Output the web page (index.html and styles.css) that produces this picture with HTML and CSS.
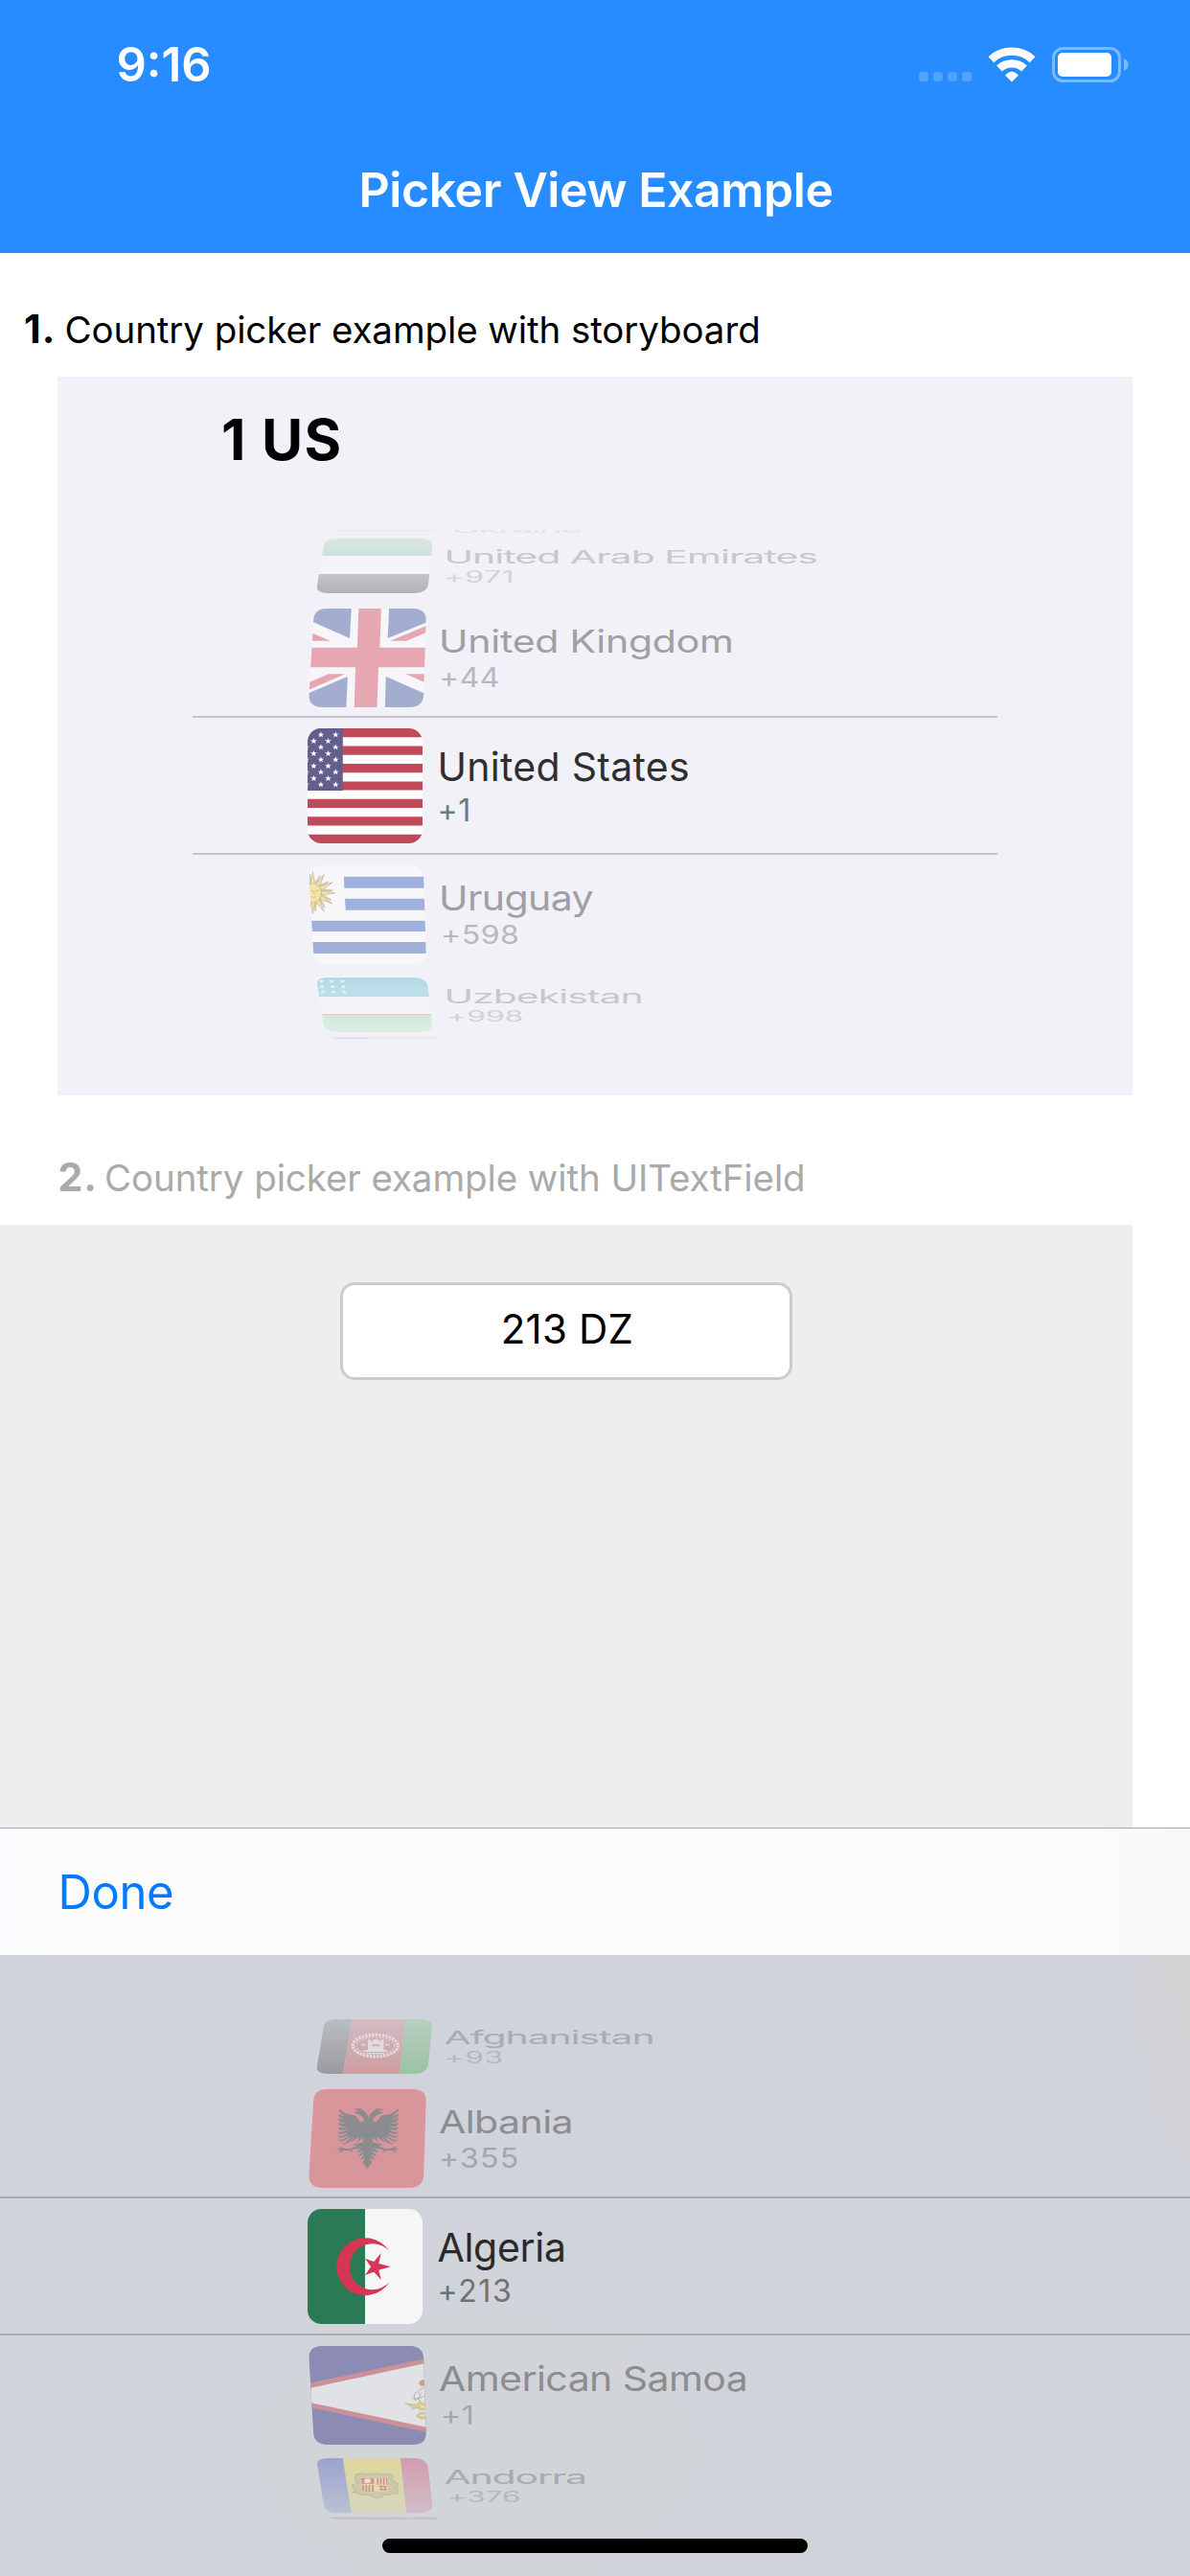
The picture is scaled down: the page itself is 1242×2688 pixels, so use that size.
FILE: index.html
```
<!DOCTYPE html>
<html lang="en">
<head>
<meta charset="utf-8">
<title>Picker View Example</title>
<link rel="stylesheet" href="styles.css">
</head>
<body>
<svg class="defs" aria-hidden="true">
  <defs>
    <clipPath id="tilt-near-top"><path d="M115 0H370Q406 3 405 37L398 270Q396 308 355 308H100Q62 306 63 270L76 37Q78 0 115 0Z"/></clipPath>
    <clipPath id="tilt-near-bottom"><path d="M100 0H360Q396 2 398 38L405 271Q406 308 366 308H115Q78 306 76 271L63 38Q62 2 100 0Z"/></clipPath>
    <clipPath id="tilt-far-top"><path d="M140 0H392Q423 2 423 20L412 141Q409 171 368 171H116Q84 169 86 151L106 22Q108 2 140 0Z"/></clipPath>
    <clipPath id="tilt-far-bottom"><path d="M116 0H370Q407 2 411 30L424 152Q421 170 384 171H140Q109 170 105 141L87 20Q84 2 116 0Z"/></clipPath>
    <clipPath id="flat"><rect x="59" width="336" height="360" rx="40" ry="43"/></clipPath>
    <linearGradient id="uae-green" x2="0" y2="1"><stop stop-color="#d9e6e2"/><stop offset="1" stop-color="#cde1da"/></linearGradient>
    <linearGradient id="uae-black" x2="0" y2="1"><stop stop-color="#c4c3c9"/><stop offset="1" stop-color="#b3b2b7"/></linearGradient>
    <linearGradient id="afg-black" x2="0" y2="1"><stop stop-color="#babdc2"/><stop offset="1" stop-color="#999ba0"/></linearGradient>
    <linearGradient id="afg-red" x2="0" y2="1"><stop stop-color="#d1bcc3"/><stop offset="1" stop-color="#cf9ca0"/></linearGradient>
    <linearGradient id="afg-green" x2="0" y2="1"><stop stop-color="#b9cec3"/><stop offset="1" stop-color="#99c49f"/></linearGradient>
    <linearGradient id="and-blue" x2="0" y2="1"><stop stop-color="#9ba4ce"/><stop offset="1" stop-color="#bbc0d4"/></linearGradient>
    <linearGradient id="and-yellow" x2="0" y2="1"><stop stop-color="#ded79c"/><stop offset="1" stop-color="#d6d6bd"/></linearGradient>
    <linearGradient id="and-red" x2="0" y2="1"><stop stop-color="#d29dae"/><stop offset="1" stop-color="#d1bcc7"/></linearGradient>
    <linearGradient id="uzb-blue" x2="0" y2="1"><stop stop-color="#b1dae7"/><stop offset="1" stop-color="#bfe0ea"/></linearGradient>
    <linearGradient id="uzb-green" x2="0" y2="1"><stop stop-color="#d2eada"/><stop offset="1" stop-color="#ddede4"/></linearGradient>
    <path id="star" d="M0-10 2.4-3.1H9.5L3.8 1.2 5.9 8.1 0 3.9-5.9 8.1-3.8 1.2-9.5-3.1H-2.4Z"/>
    <g id="ray"><path d="M-7-24 0-66 7-24Z"/><path d="M7-25Q18-40 22-54Q10-38 2-26" /></g>
    <g id="eagle-half">
      <path d="M2 395L-2 383Q-8 371-20 362Q-32 357-44 365Q-34 364-27 367Q-38 370-43 374Q-25 376-16 388Q-9 397-17 402Q-25 402-29 394Q-33 381-49 380Q-70 377-81 361Q-86 365-83 369Q-77 378-65 384Q-79 381-84 377Q-86 384-79 389Q-72 394-62 395Q-78 396-84 390Q-86 400-75 404L-60 405Q-76 410-84 404Q-84 414-74 417L-58 416Q-74 424-84 418Q-84 428-72 428L-58 426Q-73 438-85 432Q-83 442-71 440L-56 435Q-71 450-85 445Q-83 454-70 451L-53 441Q-67 461-84 457Q-79 466-66 461L-47 446Q-57 465-70 470Q-64 474-54 467L-39 449Q-43 459-51 463Q-43 465-36 458L-26 449Q-25 459-32 465Q-23 464-18 455L-14 450Q-10 463-18 467Q-22 469-29 470L-42 472Q-38 477-32 478Q-43 482-50 486L-68 485-82 477-76 485-92 487-76 490-82 500-66 491-49 492-41 500-45 490Q-33 482-24 487L-15 479Q-22 491-31 496Q-23 500-13 490Q-19 505-28 509Q-20 512-11 502Q-14 516-22 520Q-14 521-7 512Q-9 523-13 529L-2 546H2Z"/>
    </g>
  </defs>
</svg>

<header class="header">
  <div class="status">
    <span class="time">9:16</span>
    <div class="indicators">
      <div class="dots"><i></i><i></i><i></i><i></i></div>
      <svg class="wifi" viewBox="274 56 144 110">
        <g fill="none" stroke="#fff" stroke-width="25"><path d="M281 95A95.5 95.5 0 0 1 411 95"/><path d="M307 123A57 57 0 0 1 385 123"/></g>
        <path fill="#fff" d="M346 165 325 144Q346 121 367 144Z"/>
      </svg>
      <svg class="battery" viewBox="0 0 80 38">
        <rect x="1.5" y="1.5" width="69" height="34" rx="10" fill="none" stroke="#7cbaff" stroke-width="3"/>
        <rect x="6" y="6" width="56" height="25" rx="5" fill="#fff"/>
        <path d="M75 12Q79.500 14 79.500 18.500T75 25Z" fill="#7cbaff"/>
      </svg>
    </div>
  </div>
  <h1 class="title">Picker View Example</h1>
</header>

<main>
  <h2 class="heading first"><b>1.</b><span>Country picker example with storyboard</span></h2>
  <section class="card">
    <p class="selection">1 US</p>
    <div class="picker light">
      <div class="row sliver top">
        <svg class="flag" viewBox="58.8 0 375.2 10" preserveAspectRatio="none"><path fill="#e7e6ed" d="M142 1H435L441 4H133Z"/><path fill="#f3f3dc" d="M130 5H436V7H128Z"/></svg>
        <div class="label"><span class="name">Ukraine</span></div>
      </div>
      <div class="row far up">
        <svg class="flag" viewBox="58.8 0 375.2 171" preserveAspectRatio="none"><g clip-path="url(#tilt-far-top)"><path fill="#f5f4f9" d="M50 0H440V171H50Z"/><path fill="url(#uae-green)" d="M50 0H440V54H50Z"/><path fill="url(#uae-black)" d="M50 111H440V171H50Z"/></g></svg>
        <div class="label"><span class="name">United Arab Emirates</span><span class="code">+971</span></div>
      </div>
      <div class="row near up">
        <svg class="flag" viewBox="58.8 0 375.2 308" preserveAspectRatio="none"><g clip-path="url(#tilt-near-top)"><g transform="translate(0 -315)">
          <path fill="#f6f6fa" d="M50 315H420V623H50Z"/>
          <path fill="#a2adcf" d="M60 315H187L182 408 60 350ZM297 315H420V352L293 408ZM176 527 172 623H55V582ZM288 527 420 589V623H285Z"/>
          <path fill="#e7a7b2" d="M208 315H274L270 437H410V498H266L262 623H195L199 498H60V437H204ZM60 386 126 416H60ZM410 367V388L348 416H300ZM60 547 120 519H168L60 570ZM345 519H410V549Z"/>
        </g></g></svg>
        <div class="label"><span class="name">United Kingdom</span><span class="code">+44</span></div>
      </div>
      <div class="row current">
        <svg class="flag" viewBox="59 0 336 360" preserveAspectRatio="none"><g clip-path="url(#flat)"><g transform="translate(0 -60)">
          <path fill="#fdfdfd" d="M59 60H395V420H59Z"/>
          <path stroke="#be4a5a" stroke-width="27.7" d="M59 73.800H395M59 129.200H395M59 184.600H395M59 240H395M59 295.400H395M59 350.800H395M59 406.200H395"/>
          <path fill="#625f8c" d="M59 60H162V255H59Z"/>
          <g fill="#fff">
            <use href="#star" x="98" y="80"/><use href="#star" x="141" y="80"/><use href="#star" x="77" y="100"/><use href="#star" x="119" y="100"/>
            <use href="#star" x="55" y="119"/><use href="#star" x="98" y="119"/><use href="#star" x="141" y="119"/><use href="#star" x="77" y="139"/><use href="#star" x="119" y="139"/>
            <use href="#star" x="55" y="158"/><use href="#star" x="98" y="158"/><use href="#star" x="141" y="158"/><use href="#star" x="77" y="178"/><use href="#star" x="119" y="178"/>
            <use href="#star" x="55" y="197"/><use href="#star" x="98" y="197"/><use href="#star" x="141" y="197"/><use href="#star" x="77" y="217"/><use href="#star" x="119" y="217"/>
            <use href="#star" x="55" y="236"/><use href="#star" x="98" y="236"/><use href="#star" x="141" y="236"/>
          </g>
        </g></g></svg>
        <div class="label"><span class="name">United States</span><span class="code">+1</span></div>
      </div>
      <div class="row near down">
        <svg class="flag" viewBox="58.8 0 375.2 308" preserveAspectRatio="none"><g clip-path="url(#tilt-near-bottom)"><g transform="translate(0 -37)">
          <path fill="#f7f7fa" d="M50 37H420V350H50Z"/>
          <path fill="#a0b0dc" d="M165 72H410V108H166ZM168 141H410V177H170ZM60 210H410V243H60ZM60 276H410V312H60Z"/>
          <g transform="translate(74 123)" fill="#f5e3a2" stroke="#b9b4a4" stroke-width="2">
            <use href="#ray"/><use href="#ray" transform="rotate(30)"/><use href="#ray" transform="rotate(60)"/><use href="#ray" transform="rotate(90)"/><use href="#ray" transform="rotate(120)"/><use href="#ray" transform="rotate(150)"/><use href="#ray" transform="rotate(180)"/><use href="#ray" transform="rotate(330)"/>
            <ellipse rx="25" ry="30"/><path fill="none" d="M-6-7H2M8-7H17M-4 12Q4 16 11 11M4-5V5"/>
          </g>
        </g></g></svg>
        <div class="label"><span class="name">Uruguay</span><span class="code">+598</span></div>
      </div>
      <div class="row far down">
        <svg class="flag" viewBox="58.8 0 375.2 171" preserveAspectRatio="none"><g clip-path="url(#tilt-far-bottom)">
          <path fill="#f4f4f9" d="M50 0H440V171H50Z"/><path fill="url(#uzb-blue)" d="M50 0H440V57H50Z"/><path fill="url(#uzb-green)" d="M50 117H440V171H50Z"/><path stroke="#ebc8d0" stroke-width="3" d="M50 58.500H440M50 115.500H440"/>
          <g fill="#f2f7fa" transform="scale(1 .5)"><use href="#star" x="99" y="24"/><use href="#star" x="130" y="24"/><use href="#star" x="161" y="24"/><use href="#star" x="101" y="57"/><use href="#star" x="133" y="57"/><use href="#star" x="164" y="57"/><use href="#star" x="103" y="91"/><use href="#star" x="135" y="91"/><use href="#star" x="166" y="91"/></g>
        </g></svg>
        <div class="label"><span class="name">Uzbekistan</span><span class="code">+998</span></div>
      </div>
      <div class="row sliver bottom">
        <svg class="flag" viewBox="58.800 0 390 12" preserveAspectRatio="none"><path fill="#f3e3e9" d="M120 2H430L436 5H125Z"/><path fill="#e0eaea" d="M134 6H441L446 10H145Z"/><path fill="#dcdae2" d="M136 5H240V8H140Z"/></svg>
      </div>
    </div>
  </section>

  <h2 class="heading second"><b>2.</b><span>Country picker example with UITextField</span></h2>
  <section class="field-area"><div class="field">213 DZ</div></section>
</main>

<footer class="keyboard">
  <div class="toolbar"><span class="done">Done</span></div>
  <div class="tray">
    <div class="picker dark">
      <div class="row sliver top"></div>
      <div class="row far up">
        <svg class="flag" viewBox="58.8 0 375.2 171" preserveAspectRatio="none"><g clip-path="url(#tilt-far-top)">
          <path fill="url(#afg-black)" d="M50 0H189L163 171H50Z"/><path fill="url(#afg-red)" d="M189 0H345L328 171H163Z"/><path fill="url(#afg-green)" d="M345 0H440V171H328Z"/>
          <g fill="none" stroke="#e2dcdf"><ellipse cx="257" cy="83" rx="66" ry="34" stroke-width="9" stroke-dasharray="7 3"/><ellipse cx="257" cy="83" rx="56" ry="27" stroke-width="3" stroke-dasharray="5 5"/></g>
          <path fill="#e2dcdf" d="M235 64H243V70H248Q249 63 259 62Q268 63 270 70H274V64H281V95L292 98V102H222V98L235 96ZM247 79V85H270V79Z"/><path fill="#e2dcdf" d="M214 82 225 76 228 83ZM300 82 288 76 286 83ZM232 105H284V108H232Z"/>
        </g></svg>
        <div class="label"><span class="name">Afghanistan</span><span class="code">+93</span></div>
      </div>
      <div class="row near up">
        <svg class="flag" viewBox="58.8 0 375.2 308" preserveAspectRatio="none"><g clip-path="url(#tilt-near-top)"><path fill="#d8969b" d="M50 0H420V308H50Z"/>
          <g fill="#8b8c90" transform="matrix(1.04 0 -.026 1 247 -300)"><use href="#eagle-half"/><use href="#eagle-half" transform="scale(-1 1)"/></g></g></svg>
        <div class="label"><span class="name">Albania</span><span class="code">+355</span></div>
      </div>
      <div class="row current">
        <svg class="flag" viewBox="59 0 336 360" preserveAspectRatio="none"><g clip-path="url(#flat)"><g transform="translate(0 -75)">
          <path fill="#f6f6f6" d="M59 75H395V435H59Z"/><path fill="#2a7a55" d="M59 75H227V435H59Z"/>
          <path fill="#d43754" d="M299 208A84 90 0 1 0 299 303A67 72 0 1 1 299 208ZM302 256 267 266 274 297 253 272 227 282 244 256 227 230 253 240 274 213 267 246Z"/>
        </g></g></svg>
        <div class="label"><span class="name">Algeria</span><span class="code">+213</span></div>
      </div>
      <div class="row near down">
        <svg class="flag" viewBox="58.8 0 375.2 308" preserveAspectRatio="none"><g clip-path="url(#tilt-near-bottom)"><g transform="translate(0 -53)">
          <path fill="#8b8bb3" d="M50 53H420V362H50Z"/><path fill="#ca919a" d="M50 172 410 90V323L50 241Z"/><path fill="#e0e2e6" d="M50 188 410 105V307L50 226Z"/>
          <path fill="#cf9a8c" d="M384 168Q388 159 400 157V178L388 177Z"/><path fill="#e4e6ea" stroke="#9b9da1" stroke-width="2" d="M400 184Q385 186 372 202Q368 213 374 219Q387 217 402 208M380 204 390 194M385 208 395 198"/>
          <path fill="#dfcb92" stroke="#aaa58f" stroke-width="1.500" d="M365 214Q374 222 384 214L388 208Q386 221 373 222ZM345 232 370 236Q384 235 386 228V220L391 232H404V252L388 253 378 245 366 251 364 243ZM379 268 388 261H404V280Q391 283 379 274Z"/><path fill="none" stroke="#fff5ce" stroke-width="2" d="M388 239 401 245M386 270H402"/>
        </g></g></svg>
        <div class="label"><span class="name">American Samoa</span><span class="code">+1</span></div>
      </div>
      <div class="row far down">
        <svg class="flag" viewBox="58.8 0 375.2 171" preserveAspectRatio="none"><g clip-path="url(#tilt-far-bottom)">
          <path fill="url(#and-blue)" d="M50 0H162L187 171H50Z"/><path fill="url(#and-yellow)" d="M162 0H330L348 171H187Z"/><path fill="url(#and-red)" d="M330 0H440V171H348Z"/>
          <path fill="#cdc8a8" stroke="#b5b29d" stroke-width="3" stroke-dasharray="6 2" d="M202 52Q218 44 232 51L257 48 282 51Q299 45 310 56L303 68Q318 72 324 86L317 96Q329 104 318 112Q304 109 298 115Q281 112 276 122Q261 128 248 121Q241 112 225 115Q211 115 205 109L190 107 200 97Q183 90 193 82L207 79Q190 68 202 52Z"/>
          <path fill="#e0d9a8" d="M215 62H292L294 104H218Z"/><path fill="#d08f94" d="M216 63H253V80H217ZM219 84H224V103H219ZM228 84H233V105H228ZM237 84H242V105H237ZM247 84H252V105H247ZM261 63H266V83H262ZM270 63H275V83H271ZM279 63H284V83H280ZM288 63H292V83H289ZM266 87H290V90H266ZM268 97H291V100H268ZM273 86H277V102H273ZM283 86H287V102H283Z"/><ellipse cx="234" cy="71" rx="10" ry="7" fill="#e9e2c4"/>
        </g></svg>
        <div class="label"><span class="name">Andorra</span><span class="code">+376</span></div>
      </div>
      <div class="row sliver bottom">
        <svg class="flag" viewBox="58.800 0 390 12" preserveAspectRatio="none"><path fill="#d3b6bc" d="M120 2H430L441 7H135Z"/><path fill="#c3c4c9" d="M135 7H441L446 10H145Z"/><path fill="#dccfb0" d="M255 3H261V7H255ZM343 3H365V7H347Z"/></svg>
      </div>
    </div>
    <div class="home"></div>
  </div>
</footer>
</body>
</html>
```
FILE: styles.css
```
* { box-sizing: border-box; }
body {
  margin: 0;
  width: 1242px;
  height: 2688px;
  overflow: hidden;
  background: #fff;
  color: #000;
  font-family: Inter, "Liberation Sans", sans-serif;
}
h1, h2, p { margin: 0; font-weight: 400; }
.defs { display: block; width: 0; height: 0; }

/* Header */
.header { height: 264px; background: #268cff; color: #fff; }
.status {
  display: flex;
  justify-content: space-between;
  height: 168px;
  padding: 38px 64px 0 121.5px;
}
.time { font-size: 49px; font-weight: 600; line-height: 60px; }
.indicators { display: flex; padding-top: 11px; }
.dots { display: flex; gap: 5px; padding-top: 26px; margin-right: 18px; }
.dots i { width: 10px; height: 10px; border-radius: 3px; background: #52a3ff; }
.wifi { width: 48px; height: 37px; margin-right: 18.500px; }
.battery { width: 80px; height: 38px; }
.title {
  padding-left: 2px;
  font-size: 50px;
  font-weight: 600;
  line-height: 60px;
  letter-spacing: -.41px;
  text-align: center;
}

/* Section headings */
.heading {
  display: flex;
  align-items: baseline;
  height: 50px;
  font-size: 38.5px;
  line-height: 50px;
  letter-spacing: -.09px;
}
.heading b { font-size: 41px; letter-spacing: 1px; }
.first { margin: 54px 0 25px 25px; }
.first b { width: 42.500px; }
.second { margin: 60px 0 25px 60.500px; color: #aaa; }
.second b { width: 48.500px; }

.card {
  width: 1122px;
  height: 750px;
  margin-left: 60px;
  padding-top: 30.500px;
  background: #f2f1f7;
}
.selection {
  margin: 0 0 58.500px 171px;
  font-size: 59px;
  font-weight: 700;
  line-height: 70px;
  letter-spacing: 1.3px;
}

/* Wheel picker */
.picker { height: 533px; }
.light { width: 840px; margin: 0 auto; --inset: 120px; --line: #c4c3c8; }
.dark { --inset: 321px; --line: #a7a9ad; }
.row { display: flex; align-items: flex-start; padding-left: var(--inset); }
.flag { display: block; flex: none; width: 134px; }
.label { display: flex; flex-direction: column; white-space: nowrap; }
.name, .code { display: block; transform: scaleY(var(--k, 1)); transform-origin: 0 0; }
.name { height: calc(50px * var(--k, 1)); font-size: 41px; line-height: 50px; letter-spacing: var(--ls, 0); }
.code { height: calc(38px * var(--k, 1)); font-size: 32px; line-height: 38px; letter-spacing: .5px; }

.sliver { height: 4px; overflow: hidden; }
.sliver.top .flag { height: 3px; margin-top: 1px; }
.sliver.top .label { height: 3px; padding-left: 16px; margin-top: 1px; overflow: hidden; justify-content: flex-end; }
.sliver.top .name { --k: .2; --ls: -2px; height: 8px; color: #e3e2e8; }
.sliver.bottom .flag { width: 139px; height: 4px; }

.far.up { height: 66px; }
.far.up .flag { height: 57px; margin-top: 6px; }
.far.up .label { padding: 12.500px 0 0 8.500px; }
.far.up .name { --k: .47; }
.far.up .code { --k: .52; }

.near.up { height: 125px; }
.near.up .flag { height: 103px; margin-top: 13px; }
.near.up .label { padding: 26.700px 0 0 3px; gap: .5px; }
.near.up .name { --k: .81; }
.near.up .code { --k: .89; }

.current { height: 145px; border-top: 2px solid var(--line); border-bottom: 2px solid var(--line); }
.current .flag { width: 120px; height: 120px; margin-top: 11px; }
.current .label { padding: 26px 0 0 15.500px; gap: 1.800px; }

.near.down { height: 125px; }
.near.down .flag { height: 103px; margin-top: 11px; }
.near.down .label { padding: 23.700px 0 0 3px; gap: 1px; }
.near.down .name { --k: .86; }
.near.down .code { --k: .84; margin-left: 2px; }

.far.down { height: 64px; }
.far.down .flag { height: 57px; margin-top: 3px; }
.far.down .label { padding: 10.500px 0 0 8.500px; }
.far.down .name { --k: .48; }
.far.down .code { --k: .475; margin-left: 3px; letter-spacing: -.3px; }

.far { --ls: -.98px; }
.light .near.up { --ls: -.26px; }
.light .current { --ls: .29px; }
.light .near.down { --ls: -.58px; }
.dark .far.up { --ls: -1.11px; }
.dark .near { --ls: -.55px; }
.dark .current { --ls: -.3px; }
.dark .current .code { letter-spacing: 1.6px; }
.dark .near.up .code { letter-spacing: 1.2px; }
.dark .far.down { --ls: -1.2px; }

.current .name { color: #2e2f30; }
.current .code { color: #777; }
.light .near .name { color: #a0a0a4; }
.light .near .code { color: #b9b8bd; }
.light .far .name { color: #c8c7cc; }
.light .far .code { color: #d3d2d8; }
.dark .near .name { color: #8c8d91; }
.dark .near .code { color: #a5a6ab; }
.dark .far .name { color: #a9abb0; }
.dark .far .code { color: #b5b7bd; }
.dark .current .name { color: #2a2a2b; }
.dark .current .code { color: #707173; }

/* Text field */
.field-area {
  display: flex;
  justify-content: center;
  align-items: flex-start;
  width: 1182px;
  height: 629px;
  padding-top: 60px;
  background: #eee;
}
.field {
  width: 472px;
  height: 102px;
  padding: 0 0 4px 2px;
  border: 3px solid #ccc;
  border-radius: 15px;
  background: #fff;
  font-size: 42px;
  line-height: 92px;
  letter-spacing: .2px;
  text-align: center;
}

/* Input tray */
.toolbar {
  height: 133px;
  padding: 37px 0 0 60.500px;
  border-top: 1px solid #a6a6a6;
  background: linear-gradient(90deg, #fbfcff, #fcfcfc 60px, #fcfcfc 1130px, #f8f8f8);
}
.done { font-size: 49px; line-height: 60px; letter-spacing: -.4px; color: #007aff; }
.tray {
  height: 648px;
  padding-top: 57px;
  background:
    radial-gradient(ellipse 70px 260px at 1242px 0, #d2d2d4 30%, #d0d3db00),
    radial-gradient(ellipse 420px 260px at 500px 520px, #d1d4d8 30%, #d0d3db00),
    #d0d3db;
}
.home { width: 444px; height: 15px; margin: 19px auto 0; border-radius: 8px; background: #000; }
```
